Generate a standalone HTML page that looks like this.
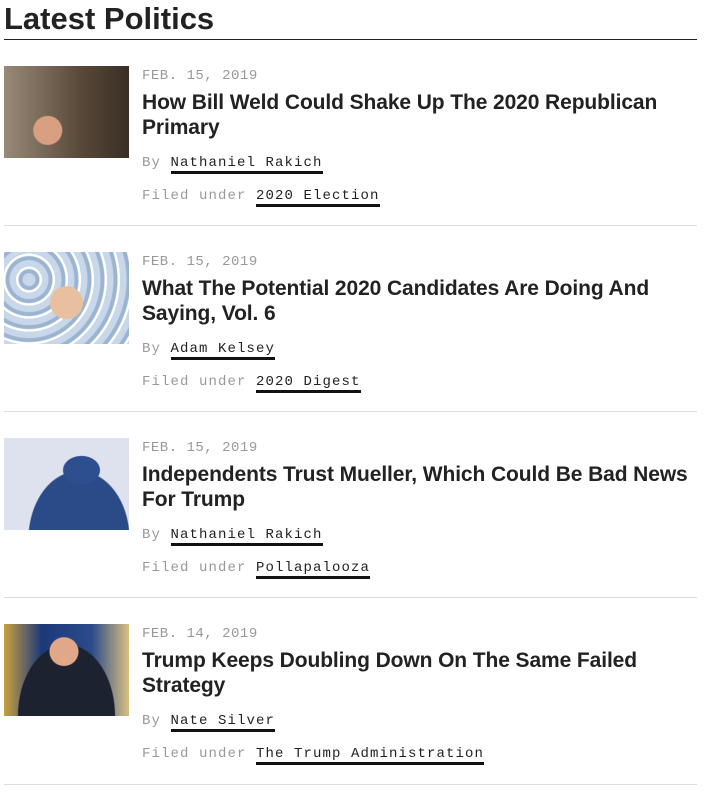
<!DOCTYPE html>
<html><head><meta charset="utf-8"><style>
body{margin:0;background:#fff;width:716px;height:801px;overflow:hidden;font-family:"Liberation Sans",sans-serif;color:#222}
h1{position:absolute;left:4px;top:1px;margin:0;font-size:31px;font-weight:bold;letter-spacing:0px;color:#222}
.rule{position:absolute;left:4px;top:39px;width:693px;height:1px;background:#222}
.item{position:absolute;left:4px;width:693px;height:186px}
.sep{position:absolute;left:0;bottom:0;width:693px;height:1px;background:#ddd}
.img{position:absolute;left:0;top:0;width:125px;height:92px}
.txt{position:absolute;left:138px;top:0;width:555px}
.mono{font-family:"Liberation Mono",monospace;font-size:14px;letter-spacing:1.1px;color:#999}
.date{position:absolute;top:2px;left:0;letter-spacing:0.5px}
.title{position:absolute;top:24px;left:0;font-size:21px;font-weight:bold;line-height:25px;color:#222;letter-spacing:-0.1px}
.by{position:absolute;left:0}
.by a{color:#222;text-decoration:none;border-bottom:3px solid #111}
</style></head><body>
<h1>Latest Politics</h1>
<div class="rule"></div>

<div class="item" style="top:66px">
<div class="img" style="background:radial-gradient(circle at 35% 70%,#d8a080 0 14px,transparent 15px),linear-gradient(90deg,#9a8a78,#5a4a3a 60%,#3a2e24)"></div>
<div class="txt">
<div class="mono date">FEB. 15, 2019</div>
<div class="title">How Bill Weld Could Shake Up The 2020 Republican<br>Primary</div>
<div class="mono by" style="top:89px">By <a>Nathaniel Rakich</a></div>
<div class="mono by" style="top:122px">Filed under <a>2020 Election</a></div>
</div>
<div class="sep" style="bottom:26px"></div>
</div>

<div class="item" style="top:252px">
<div class="img" style="background:radial-gradient(circle at 50% 55%,#e8c0a0 0 16px,transparent 17px),repeating-radial-gradient(circle at 20% 30%,#c8d8ea 0 6px,#9bb4d0 7px 10px,#fff 11px 13px)"></div>
<div class="txt">
<div class="mono date">FEB. 15, 2019</div>
<div class="title">What The Potential 2020 Candidates Are Doing And<br>Saying, Vol. 6</div>
<div class="mono by" style="top:89px">By <a>Adam Kelsey</a></div>
<div class="mono by" style="top:122px">Filed under <a>2020 Digest</a></div>
</div>
<div class="sep" style="bottom:26px"></div>
</div>

<div class="item" style="top:438px">
<div class="img" style="background:radial-gradient(ellipse at 62% 35%,#2d4f8f 0 18px,transparent 19px),radial-gradient(ellipse at 60% 110%,#2a4a88 0 50px,transparent 51px),#dde2ee"></div>
<div class="txt">
<div class="mono date">FEB. 15, 2019</div>
<div class="title">Independents Trust Mueller, Which Could Be Bad News<br>For Trump</div>
<div class="mono by" style="top:89px">By <a>Nathaniel Rakich</a></div>
<div class="mono by" style="top:122px">Filed under <a>Pollapalooza</a></div>
</div>
<div class="sep" style="bottom:26px"></div>
</div>

<div class="item" style="top:624px">
<div class="img" style="background:radial-gradient(ellipse at 48% 30%,#e0a888 0 14px,transparent 15px),radial-gradient(ellipse at 50% 100%,#1c2230 0 48px,transparent 49px),linear-gradient(90deg,#c8a040,#1c3a7a 30%,#2a4a8a 70%,#d8c080)"></div>
<div class="txt">
<div class="mono date">FEB. 14, 2019</div>
<div class="title">Trump Keeps Doubling Down On The Same Failed<br>Strategy</div>
<div class="mono by" style="top:89px">By <a>Nate Silver</a></div>
<div class="mono by" style="top:122px">Filed under <a>The Trump Administration</a></div>
</div>
<div class="sep" style="bottom:25px"></div>
</div>
</body></html>
